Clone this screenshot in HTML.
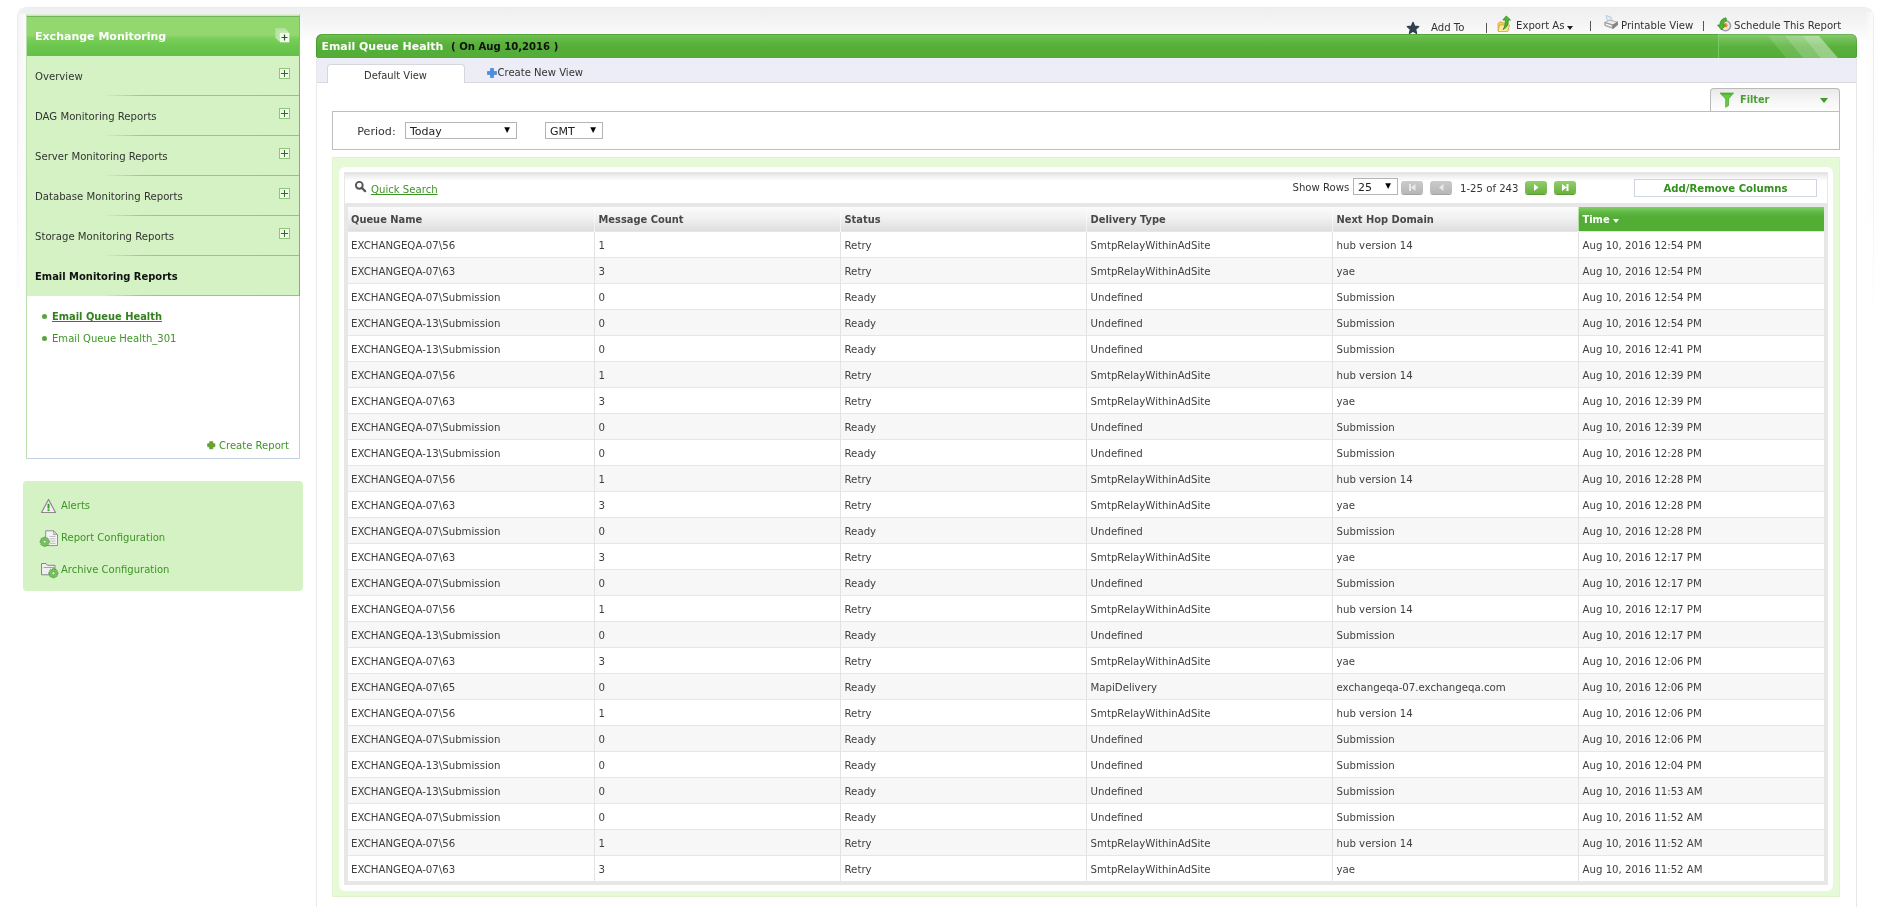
<!DOCTYPE html>
<html><head><meta charset="utf-8"><title>Email Queue Health</title>
<style>
*{box-sizing:border-box}
html,body{margin:0;padding:0}
body{width:1891px;height:907px;overflow:hidden;background:#fff;position:relative;font-family:"DejaVu Sans","Liberation Sans",sans-serif;font-size:10.15px;color:#333}
a{color:inherit;text-decoration:none}
.abs{position:absolute}
/* page frame */
#frame{left:17px;top:7px;width:1857px;height:330px;border-radius:9px 9px 0 0;border:1px solid #ececec;border-bottom:0;box-shadow:0 0 6px rgba(0,0,0,.13);
 -webkit-mask-image:linear-gradient(#000 0,#000 120px,transparent 320px);mask-image:linear-gradient(#000 0,#000 120px,transparent 320px)}
#frametop{left:18px;top:8px;width:1855px;height:34px;border-radius:8px 8px 0 0;background:linear-gradient(#eeeff0,#f4f4f5 40%,#fafafa 75%,#fff)}
#framel{left:18px;top:14px;width:8px;height:320px;background:linear-gradient(to right,#f4f4f5,#fcfcfc);-webkit-mask-image:linear-gradient(#000,transparent);mask-image:linear-gradient(#000,transparent)}
#framer{left:1864px;top:12px;width:9px;height:320px;background:linear-gradient(to left,#fcfcfc,rgba(252,252,252,0));-webkit-mask-image:linear-gradient(#000,transparent);mask-image:linear-gradient(#000,transparent)}
/* left panel */
#lp{left:26px;top:14px;width:274px;height:445px;border:1px solid #b9dfad;border-top-color:#dcefd5;border-bottom-color:#c3d3e6;background:#fff}
#lph{left:0;top:0;width:273px;border-right:1px solid #7fbf68;height:41px;border-top:1px solid #c6eab8;background:linear-gradient(#6eb45a 0,#6eb45a 1px,#93d86f 1px,#93d86f 19px,#7bcf5c 22px,#6bc74d 30px,#66c048 100%);color:#fff;font-weight:bold;font-size:11px}
.mi{left:0;width:273px;height:40px;background:#d5f2c4;border-right:1px solid #86aa81}
.mi .t{position:absolute;left:8px;top:15px;white-space:nowrap}
.mi .ln{position:absolute;left:0;right:0;bottom:0;height:1px;background:linear-gradient(to right,rgba(150,195,140,0) 28%,#9cc692 42%,#96c08c 100%)}
.plus{position:absolute;left:252px;top:12px;width:11px;height:11px;border:1px solid #8dc67c;background:#f2fbec}
.plus:before{content:"";position:absolute;left:1px;top:4px;width:7px;height:1px;background:#2f6a25}
.plus:after{content:"";position:absolute;left:4px;top:1px;width:1px;height:7px;background:#2f6a25}
.g{color:#3f9427}
/* bottom-left box */
#lb{left:23px;top:481px;width:280px;height:110px;border-radius:4px;background:#d5f2c4}
/* main */
#mainl{left:316px;top:57px;width:1px;height:850px;background:#eaeaea}
#mainr{left:1856px;top:57px;width:1px;height:850px;background:#e6e6e6}
#title{left:316px;top:34px;width:1541px;height:24px;border-radius:6px 6px 0 0;background:linear-gradient(#74c658 0,#68bc4b 3px,#5db540 8px,#55af38 13px,#52ac35 100%);box-shadow:inset 1px 1px 0 rgba(60,140,35,.55),inset -1px 0 0 rgba(60,140,35,.4);overflow:hidden}
#tabs{left:317px;top:58px;width:1539px;height:25px;background:#ecedf6;border-bottom:1px solid #d9d9df}
#tab1{left:327px;top:64px;width:138px;height:19px;background:#fff;border:1px solid #d6d6dc;border-bottom:0;border-radius:4px 4px 0 0}
#pbox{left:332px;top:111px;width:1508px;height:39px;border:1px solid #bdbdbd;background:#fff}
#ftab{left:1710px;top:88px;width:130px;height:24px;border:1px solid #b9b9b9;border-bottom:0;border-radius:4px 4px 0 0;background:linear-gradient(#e9e9e9,#f6f6f6 50%,#fff)}
.sel{position:absolute;border:1px solid #b4b4b4;background:#fff;height:17px}
.sel .v{position:absolute;left:4px;top:1.500px;font-size:11px;color:#222}
.sel .ar{position:absolute;right:6px;top:2px;font-size:7.500px;color:#000}
#gbox{left:332px;top:157px;width:1508px;height:740px;background:#e7fad8;border:1px solid #def5cd}
#gin{left:339px;top:167px;width:1494px;height:724px;background:#fff;border-radius:6px}
#ibox{left:344px;top:172px;width:1484px;height:713px;background:#e7e7e7}
#tb{left:345px;top:173px;width:1482px;height:30px;background:linear-gradient(#e2e2e2 0,#f3f3f3 4px,#fff 8px)}
table{position:absolute;left:348px;top:207px;width:1476px;border-collapse:collapse;table-layout:fixed;background:#fff}
th{height:24px;padding:2px 0 0 4px;text-align:left;font-weight:bold;font-size:9.900px;color:#484848;background:linear-gradient(#fbfbfb 0,#f1f1f1 45%,#dedede 100%);border-left:1px solid rgba(255,255,255,.55)}
th:first-child,td:first-child{border-left:0;padding-left:3px}
th.s{background:linear-gradient(#82cf67 0,#62b947 5px,#52ad35 10px,#52ad35 100%);color:#fff}
td{height:26px;padding:2px 0 0 4px;font-size:10.200px;border-left:1px solid #e3e3e3;border-top:1px solid #e6e6e6;white-space:nowrap;color:#404040}
tr.alt td{background:#f7f7f7}
.pb{position:absolute;top:181px;width:22px;height:13px;border-radius:3px}
.pb.gray{background:linear-gradient(#cbcbcb,#b6b6b6);box-shadow:0 1px 0 #a3a3a3}
.pb.grn{background:linear-gradient(#92cf69,#6bb03f);box-shadow:0 1px 0 #5a9a35}
#wrap{position:absolute;left:0;top:0;width:1891px;height:907px;overflow:hidden;will-change:transform}
</style></head><body><div id="wrap">
<div class="abs" id="frame"></div>
<div class="abs" id="frametop"></div>
<div class="abs" id="framel"></div>
<div class="abs" id="framer"></div>

<div class="abs" id="lp">
 <div class="abs" id="lph"><span class="abs" style="left:8px;top:14px;white-space:nowrap">Exchange Monitoring</span>
  <svg class="abs" style="left:248px;top:12px" width="16" height="16" viewBox="0 0 16 16"><rect x="1" y="1" width="9" height="9" fill="#a3dd88" stroke="#c3eab2"/><rect x="3" y="3" width="9" height="9" fill="#acdf93" stroke="#d0f0c2"/><rect x="4.700" y="4.700" width="9.600" height="9.600" fill="#f4fbf0"/><path d="M9.500 6.500v6M6.500 9.500h6" stroke="#2d5a25" stroke-width="1.200"/></svg>
 </div>
 <div class="abs mi" style="top:41px"><span class="t">Overview</span><i class="plus"></i><i class="ln"></i></div>
 <div class="abs mi" style="top:81px"><span class="t">DAG Monitoring Reports</span><i class="plus"></i><i class="ln"></i></div>
 <div class="abs mi" style="top:121px"><span class="t">Server Monitoring Reports</span><i class="plus"></i><i class="ln"></i></div>
 <div class="abs mi" style="top:161px"><span class="t">Database Monitoring Reports</span><i class="plus"></i><i class="ln"></i></div>
 <div class="abs mi" style="top:201px"><span class="t">Storage Monitoring Reports</span><i class="plus"></i><i class="ln"></i></div>
 <div class="abs mi" style="top:241px"><span class="t" style="font-weight:bold;font-size:9.950px;color:#111">Email Monitoring Reports</span><i class="ln"></i></div>
 <span class="abs" style="left:15px;top:299px;width:5px;height:5px;border-radius:2.500px;background:#55a63a"></span>
 <a class="abs g" style="left:25px;top:296px;font-size:9.900px;font-weight:bold;text-decoration:underline;white-space:nowrap;color:#35801f">Email Queue Health</a>
 <span class="abs" style="left:15px;top:321px;width:5px;height:5px;border-radius:2.500px;background:#55a63a"></span>
 <a class="abs g" style="left:25px;top:318px;font-size:10.050px;white-space:nowrap">Email Queue Health_301</a>
 <svg class="abs" style="left:180px;top:426px" width="8.500" height="8.500" viewBox="0 0 10 10"><path d="M3.2 0.8h3.6v2.4h2.4v3.6H6.8v2.4H3.2V6.800H0.8V3.2h2.4z" fill="#6aa52c" stroke="#4d8a1f" stroke-width=".8" stroke-linejoin="round"/></svg>
 <a class="abs g" style="left:192px;top:425px;font-size:10.050px;white-space:nowrap">Create Report</a>
</div>

<div class="abs" id="lb">
 <svg class="abs" style="left:17px;top:17px" width="17" height="16" viewBox="0 0 17 16"><path d="M8.500 1.500L15.500 14.500H1.500z" fill="#f1f1f1" stroke="#8a8a8a" stroke-width="1.200" stroke-linejoin="round"/><rect x="7.500" y="5.800" width="2" height="4.800" fill="#3c9a2a"/><rect x="7.500" y="11.300" width="2" height="1.800" fill="#3c9a2a"/></svg>
 <a class="abs g" style="left:38px;top:19px;font-size:10px;white-space:nowrap">Alerts</a>
 <svg class="abs" style="left:16px;top:47px" width="20" height="20" viewBox="0 0 20 20"><path d="M6.700 2.800h8l3.800 3.800v11h-11.800z" fill="#f4f4f4" stroke="#8f8f8f"/><path d="M14.700 2.800v3.800h3.800z" fill="#dcdcdc" stroke="#8f8f8f" stroke-width=".8"/><path d="M10.500 8.500h6M10.500 10.800h6M10.500 13.100h6M10.500 15.400h6" stroke="#b9b9b9" stroke-width=".9"/><path d="M8.96 12.47L10.31 12.83L10.31 14.67L8.96 15.03L8.91 15.15L9.61 16.36L8.31 17.66L7.10 16.96L6.98 17.01L6.62 18.36L4.78 18.36L4.42 17.01L4.30 16.96L3.09 17.66L1.79 16.36L2.49 15.15L2.44 15.03L1.09 14.67L1.09 12.83L2.44 12.47L2.49 12.35L1.79 11.14L3.09 9.84L4.30 10.54L4.42 10.49L4.78 9.14L6.62 9.14L6.98 10.49L7.10 10.54L8.31 9.84L9.61 11.14L8.91 12.35z" fill="#7cc662" stroke="#4b9b36" stroke-width=".7" stroke-linejoin="round"/><circle cx="5.700" cy="13.750" r="1.700" fill="#d5f0c6" stroke="#4b9b36" stroke-width=".7"/></svg>
 <a class="abs g" style="left:38px;top:51px;font-size:10px;white-space:nowrap">Report Configuration</a>
 <svg class="abs" style="left:16px;top:80px" width="20" height="19" viewBox="0 0 20 19"><path d="M2.500 2.500h4.500l1.500 1.800h7.500v9.500h-13.500z" fill="#efefef" stroke="#858585"/><path d="M4.500 6.500h11v7" fill="none" stroke="#a5a5a5"/><path d="M17.66 10.97L19.01 11.33L19.01 13.17L17.66 13.53L17.61 13.65L18.31 14.86L17.01 16.16L15.80 15.46L15.68 15.51L15.32 16.86L13.48 16.86L13.12 15.51L13.00 15.46L11.79 16.16L10.49 14.86L11.19 13.65L11.14 13.53L9.79 13.17L9.79 11.33L11.14 10.97L11.19 10.85L10.49 9.64L11.79 8.34L13.00 9.04L13.12 8.99L13.48 7.64L15.32 7.64L15.68 8.99L15.80 9.04L17.01 8.34L18.31 9.64L17.61 10.85z" fill="#7cc662" stroke="#4b9b36" stroke-width=".7" stroke-linejoin="round"/><circle cx="14.400" cy="12.250" r="1.700" fill="#d5f0c6" stroke="#4b9b36" stroke-width=".7"/></svg>
 <a class="abs g" style="left:38px;top:83px;font-size:10px;white-space:nowrap">Archive Configuration</a>
</div>

<!-- top links -->
<div class="abs" style="left:0;top:0;width:1891px;height:34px;color:#333">
 <svg class="abs" style="left:1406px;top:21px" width="14" height="14" viewBox="0 0 14 14"><path d="M7 1.300l1.700 3.900 4.100.4-3.100 2.800.9 4.100L7 10.300 3.400 12.500l.9-4.100L1.200 5.600l4.100-.4z" fill="#2f3f4f" stroke="#2f3f4f" stroke-width="1.200" stroke-linejoin="round"/></svg>
 <span class="abs" style="left:1431px;top:21.500px;white-space:nowrap">Add To</span>
 <span class="abs" style="left:1486px;top:23px;width:1px;height:10px;background:#555"></span>
 <svg class="abs" style="left:1497px;top:15px" width="16" height="18" viewBox="0 0 16 18"><path d="M1 8.500l1.500-1.500h3l1 1h4.500v7.500h-10z" fill="#f2cf5a" stroke="#d1a63a" stroke-width=".8"/><path d="M2.500 10h10l-1.800 6.500h-9.700z" fill="#fbe9a0" stroke="#d1a63a" stroke-width=".8"/><path d="M9.300 1l4.200 4h-2.200c.2 4.500-1.700 8-5.300 9.500 1.800-2.500 2.500-5.500 2.300-9.500H5.800z" fill="#4cb82e" stroke="#2f8a1a" stroke-width=".8" stroke-linejoin="round"/></svg>
 <span class="abs" style="left:1516px;top:20px;white-space:nowrap">Export As</span>
 <span class="abs" style="left:1567px;top:26px;width:0;height:0;border:3px solid transparent;border-top:4px solid #222;border-bottom:0"></span>
 <span class="abs" style="left:1590px;top:21px;width:1px;height:10px;background:#555"></span>
 <svg class="abs" style="left:1604px;top:14px" width="15" height="16" viewBox="0 0 15 16"><path d="M2 1.500l5 1.500 1.500 5h-5z" fill="#dfeaf6" stroke="#b4c6da" stroke-width=".8"/><path d="M.8 8.500l4.500-2.300 8.200 1.800-4.500 3z" fill="#ededed" stroke="#9b9b9b" stroke-width=".7"/><path d="M.8 8.500l8.200 2.500v3.500l-8.200-3z" fill="#c4c4c4" stroke="#8a8a8a" stroke-width=".7"/><path d="M9 11l4.500-3v3l-4.500 3.500z" fill="#858585" stroke="#777" stroke-width=".7"/><path d="M2 10.300l5.500 1.800" stroke="#fff" stroke-width="1"/></svg>
 <span class="abs" style="left:1621px;top:20px;white-space:nowrap">Printable View</span>
 <span class="abs" style="left:1703px;top:21px;width:1px;height:10px;background:#555"></span>
 <svg class="abs" style="left:1717px;top:17px" width="15" height="17" viewBox="0 0 15 17"><circle cx="8.500" cy="8.800" r="5" fill="#f6e6d6" stroke="#9c9caa" stroke-width="1.500"/><circle cx="8.300" cy="8.300" r="2.300" fill="#f08a3c"/><path d="M9 .800A7.500 7.500 0 0 0 2.800 8H.5l4 5 3.800-5H6A4.500 4.500 0 0 1 9.500 3.800z" fill="#4cb52f" stroke="#2f8a1a" stroke-width=".7" stroke-linejoin="round"/></svg>
 <span class="abs" style="left:1734px;top:20px;white-space:nowrap">Schedule This Report</span>
</div>

<!-- title bar -->
<div class="abs" id="title">
 <svg class="abs" style="left:1402px;top:0" width="139" height="24" viewBox="0 0 139 24"><defs><linearGradient id="tg" x1="0" y1="0" x2="0" y2="1"><stop offset="0" stop-color="#fff" stop-opacity=".16"/><stop offset=".5" stop-color="#fff" stop-opacity=".03"/><stop offset="1" stop-color="#fff" stop-opacity="0"/></linearGradient></defs><rect x="0" y="0" width="139" height="24" fill="url(#tg)"/><rect x="0" y="0" width="1" height="24" fill="#86cf6d" opacity=".7"/><path d="M50 2h17l18 22h-17z" fill="#fff" opacity=".13"/><path d="M67 2h17.500l18 22h-17.500z" fill="#fff" opacity=".27"/><path d="M84.500 2h16.500l19 22h-17.500z" fill="#fff" opacity=".40"/></svg>
 <span class="abs" style="left:5.500px;top:6px;color:#fff;font-weight:bold;font-size:10.950px;white-space:nowrap">Email Queue Health</span>
 <span class="abs" style="left:135px;top:7px;color:#111;font-weight:bold;font-size:10.100px;white-space:nowrap">( On Aug 10,2016 )</span>
</div>
<div class="abs" id="mainl"></div><div class="abs" id="mainr"></div>
<div class="abs" id="tabs"></div>
<div class="abs" id="tab1"><span class="abs" style="left:36px;top:5px;font-size:9.920px;white-space:nowrap">Default View</span></div>
<svg class="abs" style="left:487px;top:68px" width="10" height="10" viewBox="0 0 10 10"><path d="M3.500 0.500h3v3h3v3h-3v3h-3v-3h-3v-3h3z" fill="#4a90e2" stroke="#3577cc" stroke-width=".6"/></svg>
<span class="abs" style="left:497.500px;top:67px;font-size:10.050px;white-space:nowrap">Create New View</span>

<!-- filter tab + period -->
<div class="abs" id="ftab">
 <svg class="abs" style="left:8px;top:3px" width="16" height="16" viewBox="0 0 16 16"><path d="M1 1h13.500l-5 6v6.500l-2.800 1.800v-8.300z" fill="#66c944" stroke="#4caf30" stroke-width=".8" stroke-linejoin="round"/><path d="M2.500 2h10.500" stroke="#4aa82e" stroke-width="1.200"/></svg>
 <span class="abs" style="left:29px;top:5px;font-size:9.750px;font-weight:bold;color:#48a030;white-space:nowrap">Filter</span>
 <span class="abs" style="left:108.800px;top:8.500px;width:0;height:0;border:4.700px solid transparent;border-top:5px solid #3f9a26;border-bottom:0"></span>
</div>
<div class="abs" id="pbox">
 <span class="abs" style="left:24.300px;top:13px;font-size:11.100px;white-space:nowrap">Period:</span>
 <div class="sel" style="left:72px;top:10px;width:112px"><span class="v">Today</span><span class="ar">▼</span></div>
 <div class="sel" style="left:212px;top:10px;width:58px"><span class="v">GMT</span><span class="ar">▼</span></div>
</div>

<!-- table container -->
<div class="abs" id="gbox"></div>
<div class="abs" id="gin"></div>
<div class="abs" id="ibox"></div>
<div class="abs" id="tb"></div>
<svg class="abs" style="left:354px;top:180px" width="14" height="14" viewBox="0 0 14 14"><circle cx="5.300" cy="5.300" r="3.400" fill="none" stroke="#555" stroke-width="1.900"/><path d="M7.900 7.900l3.300 3.300" stroke="#555" stroke-width="2.200" stroke-linecap="round"/></svg>
<a class="abs g" style="left:371px;top:184px;text-decoration:underline;white-space:nowrap">Quick Search</a>
<span class="abs" style="left:1292.500px;top:182px;white-space:nowrap">Show Rows</span>
<div class="sel abs" style="left:1353px;top:178px;width:45px"><span class="v">25</span><span class="ar">▼</span></div>
<div class="pb gray" style="left:1401px"><svg width="22" height="13" viewBox="0 0 22 13"><path d="M8 3h2v7h-2zM14.500 3v7L10 6.500z" fill="#e9e9e9"/></svg></div>
<div class="pb gray" style="left:1430px"><svg width="22" height="13" viewBox="0 0 22 13"><path d="M13.500 3v7L9 6.500z" fill="#e9e9e9"/></svg></div>
<span class="abs" style="left:1460px;top:183px;white-space:nowrap">1-25 of 243</span>
<div class="pb grn" style="left:1525px"><svg width="22" height="13" viewBox="0 0 22 13"><path d="M9 3v7l4.500-3.500z" fill="#fff"/></svg></div>
<div class="pb grn" style="left:1554px"><svg width="22" height="13" viewBox="0 0 22 13"><path d="M8 3v7l4.500-3.500zM12.500 3h2v7h-2z" fill="#fff"/></svg></div>
<div class="abs" style="left:1634px;top:179px;width:183px;height:18px;border:1px solid #cfd6df;background:#fff;text-align:center;line-height:18px;font-weight:bold;color:#32901d">Add/Remove Columns</div>

<table>
<colgroup><col style="width:246px"><col style="width:246px"><col style="width:246px"><col style="width:246px"><col style="width:246px"><col style="width:246px"></colgroup>
<thead><tr><th>Queue Name</th><th>Message Count</th><th>Status</th><th>Delivery Type</th><th>Next Hop Domain</th><th class="s">Time <span style="display:inline-block;width:0;height:0;border:3.500px solid transparent;border-top:4px solid #fff;border-bottom:0;vertical-align:0px"></span></th></tr></thead>
<tbody>
<tr><td>EXCHANGEQA-07\56</td><td>1</td><td>Retry</td><td>SmtpRelayWithinAdSite</td><td>hub version 14</td><td>Aug 10, 2016 12:54 PM</td></tr>
<tr class="alt"><td>EXCHANGEQA-07\63</td><td>3</td><td>Retry</td><td>SmtpRelayWithinAdSite</td><td>yae</td><td>Aug 10, 2016 12:54 PM</td></tr>
<tr><td>EXCHANGEQA-07\Submission</td><td>0</td><td>Ready</td><td>Undefined</td><td>Submission</td><td>Aug 10, 2016 12:54 PM</td></tr>
<tr class="alt"><td>EXCHANGEQA-13\Submission</td><td>0</td><td>Ready</td><td>Undefined</td><td>Submission</td><td>Aug 10, 2016 12:54 PM</td></tr>
<tr><td>EXCHANGEQA-13\Submission</td><td>0</td><td>Ready</td><td>Undefined</td><td>Submission</td><td>Aug 10, 2016 12:41 PM</td></tr>
<tr class="alt"><td>EXCHANGEQA-07\56</td><td>1</td><td>Retry</td><td>SmtpRelayWithinAdSite</td><td>hub version 14</td><td>Aug 10, 2016 12:39 PM</td></tr>
<tr><td>EXCHANGEQA-07\63</td><td>3</td><td>Retry</td><td>SmtpRelayWithinAdSite</td><td>yae</td><td>Aug 10, 2016 12:39 PM</td></tr>
<tr class="alt"><td>EXCHANGEQA-07\Submission</td><td>0</td><td>Ready</td><td>Undefined</td><td>Submission</td><td>Aug 10, 2016 12:39 PM</td></tr>
<tr><td>EXCHANGEQA-13\Submission</td><td>0</td><td>Ready</td><td>Undefined</td><td>Submission</td><td>Aug 10, 2016 12:28 PM</td></tr>
<tr class="alt"><td>EXCHANGEQA-07\56</td><td>1</td><td>Retry</td><td>SmtpRelayWithinAdSite</td><td>hub version 14</td><td>Aug 10, 2016 12:28 PM</td></tr>
<tr><td>EXCHANGEQA-07\63</td><td>3</td><td>Retry</td><td>SmtpRelayWithinAdSite</td><td>yae</td><td>Aug 10, 2016 12:28 PM</td></tr>
<tr class="alt"><td>EXCHANGEQA-07\Submission</td><td>0</td><td>Ready</td><td>Undefined</td><td>Submission</td><td>Aug 10, 2016 12:28 PM</td></tr>
<tr><td>EXCHANGEQA-07\63</td><td>3</td><td>Retry</td><td>SmtpRelayWithinAdSite</td><td>yae</td><td>Aug 10, 2016 12:17 PM</td></tr>
<tr class="alt"><td>EXCHANGEQA-07\Submission</td><td>0</td><td>Ready</td><td>Undefined</td><td>Submission</td><td>Aug 10, 2016 12:17 PM</td></tr>
<tr><td>EXCHANGEQA-07\56</td><td>1</td><td>Retry</td><td>SmtpRelayWithinAdSite</td><td>hub version 14</td><td>Aug 10, 2016 12:17 PM</td></tr>
<tr class="alt"><td>EXCHANGEQA-13\Submission</td><td>0</td><td>Ready</td><td>Undefined</td><td>Submission</td><td>Aug 10, 2016 12:17 PM</td></tr>
<tr><td>EXCHANGEQA-07\63</td><td>3</td><td>Retry</td><td>SmtpRelayWithinAdSite</td><td>yae</td><td>Aug 10, 2016 12:06 PM</td></tr>
<tr class="alt"><td>EXCHANGEQA-07\65</td><td>0</td><td>Ready</td><td>MapiDelivery</td><td>exchangeqa-07.exchangeqa.com</td><td>Aug 10, 2016 12:06 PM</td></tr>
<tr><td>EXCHANGEQA-07\56</td><td>1</td><td>Retry</td><td>SmtpRelayWithinAdSite</td><td>hub version 14</td><td>Aug 10, 2016 12:06 PM</td></tr>
<tr class="alt"><td>EXCHANGEQA-07\Submission</td><td>0</td><td>Ready</td><td>Undefined</td><td>Submission</td><td>Aug 10, 2016 12:06 PM</td></tr>
<tr><td>EXCHANGEQA-13\Submission</td><td>0</td><td>Ready</td><td>Undefined</td><td>Submission</td><td>Aug 10, 2016 12:04 PM</td></tr>
<tr class="alt"><td>EXCHANGEQA-13\Submission</td><td>0</td><td>Ready</td><td>Undefined</td><td>Submission</td><td>Aug 10, 2016 11:53 AM</td></tr>
<tr><td>EXCHANGEQA-07\Submission</td><td>0</td><td>Ready</td><td>Undefined</td><td>Submission</td><td>Aug 10, 2016 11:52 AM</td></tr>
<tr class="alt"><td>EXCHANGEQA-07\56</td><td>1</td><td>Retry</td><td>SmtpRelayWithinAdSite</td><td>hub version 14</td><td>Aug 10, 2016 11:52 AM</td></tr>
<tr><td>EXCHANGEQA-07\63</td><td>3</td><td>Retry</td><td>SmtpRelayWithinAdSite</td><td>yae</td><td>Aug 10, 2016 11:52 AM</td></tr>
</tbody></table>
</div></body></html>
